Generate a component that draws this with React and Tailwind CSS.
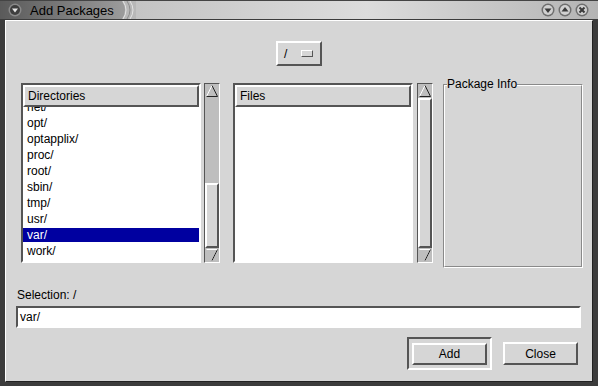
const DIRS = ['net/', 'opt/', 'optapplix/', 'proc/', 'root/', 'sbin/', 'tmp/', 'usr/', 'var/', 'work/']

const sunken = 'border-t-[#555] border-l-[#555] border-b-white border-r-white'
const raised = 'border-t-white border-l-white border-b-[#555] border-r-[#555]'

function UpArrow() {
  return (
    <svg width="14" height="14" viewBox="0 0 14 14" className="block">
      <polyline points="1.5,12.5 7,1.5" stroke="#fff" strokeWidth="1" fill="none" />
      <polyline points="7,1.5 12.5,12.5 1.5,12.5" stroke="#222" strokeWidth="1" fill="none" />
    </svg>
  )
}

function DownArrow() {
  return (
    <svg width="14" height="14" viewBox="0 0 14 14" className="block">
      <polyline points="1.5,1.5 12.5,1.5 7,12.5" stroke="#fff" strokeWidth="1" fill="none" />
      <polyline points="12.5,1.5 7,12.5" stroke="#222" strokeWidth="1" fill="none" />
    </svg>
  )
}

function Scrollbar({ full }) {
  return (
    <div className={`w-[16px] h-[180px] border ${sunken} bg-[#bebebe] flex flex-col`}>
      <UpArrow />
      {full ? (
        <div className={`flex-1 border-2 ${raised} bg-[#d6d6d6]`} />
      ) : (
        <>
          <div className="h-[85px]" />
          <div className={`flex-1 border-2 ${raised} bg-[#d6d6d6]`} />
        </>
      )}
      <DownArrow />
    </div>
  )
}

function ListBox({ title, items, selected }) {
  return (
    <div className={`w-[180px] h-[180px] border-2 ${sunken} bg-white flex flex-col`}>
      <div className={`h-[22px] shrink-0 border-2 ${raised} bg-[#d6d6d6] pl-[3px] flex items-center`}>
        {title}
      </div>
      <div className="flex-1 overflow-hidden">
        <div className="-mt-[8px]">
          {items.map(d => (
            <div key={d} className="h-[16px] py-[1px]">
              <div className={`h-[14px] leading-[14px] pl-[4px] ${d === selected ? 'bg-[#0000a0] text-white' : ''}`}>{d}</div>
            </div>
          ))}
        </div>
      </div>
    </div>
  )
}

function TitleButton({ kind }) {
  return (
    <svg width="14" height="14" viewBox="0 0 14 14" className="block">
      <circle cx="7" cy="7" r="6.5" fill="#6e6e6e" />
      <circle cx="7" cy="7" r="5" fill="#d0d0d0" />
      {kind === 'down' && <polygon points="3.5,5.5 10.5,5.5 7,10" fill="#3a3a3a" />}
      {kind === 'up' && <polygon points="3.5,8.5 10.5,8.5 7,4" fill="#3a3a3a" />}
      {kind === 'close' && (
        <g stroke="#3a3a3a" strokeWidth="2">
          <line x1="4.5" y1="4.5" x2="9.5" y2="9.5" />
          <line x1="9.5" y1="4.5" x2="4.5" y2="9.5" />
        </g>
      )}
    </svg>
  )
}

export default function App() {
  return (
    <div className="w-[598px] h-[386px] bg-[#3c3c3c] flex flex-col text-[12px] text-black overflow-hidden" style={{ fontFamily: '"Liberation Sans", Arial, sans-serif' }}>
      {/* title bar */}
      <div className="h-[19px] shrink-0 flex border-t border-[#444]">
        <div className="w-[122px] bg-gradient-to-r from-[#5a5a5a] to-[#9a9a9a] flex items-center pl-[8px] gap-[8px]">
          <svg width="14" height="14" viewBox="0 0 14 14" className="block">
            <circle cx="7" cy="7" r="6.5" fill="#8a8a8a" />
            <circle cx="7" cy="7" r="5" fill="#3e3e3e" />
            <polygon points="4,5.5 10,5.5 7,9.5" fill="#e8e8e8" />
          </svg>
          <span className="text-[13px] leading-none">Add Packages</span>
        </div>
        <svg width="14" height="18" viewBox="0 0 14 18" className="block bg-[#b8b8b8]">
          <path d="M0 0 Q6 9 0 18 L0 0 Z" fill="#9a9a9a" />
          <path d="M1 0 Q7 9 1 18" stroke="#e4e4e4" fill="none" />
          <path d="M5 0 Q11 9 5 18" stroke="#8c8c8c" fill="none" />
          <path d="M8 0 Q14 9 8 18" stroke="#e4e4e4" fill="none" />
        </svg>
        <div className="flex-1 bg-gradient-to-r from-[#c4c4c4] via-[#dcdcdc] to-[#b4b4b4] flex items-center justify-end gap-[3px] pr-[9px]">
          <TitleButton kind="down" />
          <TitleButton kind="up" />
          <TitleButton kind="close" />
        </div>
      </div>

      {/* body */}
      <div className="flex-1 flex px-[5px] pb-[4px] pt-[1px] bg-[#3c3c3c]">
        <div className="flex-1 flex flex-col bg-[#d6d6d6] border-l border-t border-l-white border-t-white border-r border-b border-r-[#222] border-b-[#222]">
          <div className="flex justify-center pt-[20px]">
            <div className={`w-[46px] h-[25px] border-2 ${raised} flex items-center pl-[6px] gap-[14px]`}>
              <span>/</span>
              <div className={`w-[12px] h-[7px] border ${raised}`} />
            </div>
          </div>

          <div className="flex pl-[15px] mt-[17px]">
            <ListBox title="Directories" items={DIRS} selected="var/" />
            <div className="ml-[3px]"><Scrollbar /></div>
            <div className="ml-[13px]"><ListBox title="Files" items={[]} /></div>
            <div className="ml-[4px]"><Scrollbar full /></div>
            <div className="ml-[10px] mt-[1px] relative w-[140px] h-[184px] border border-t-[#8a8a8a] border-l-[#8a8a8a] border-b-white border-r-white">
              <div className="w-full h-full border border-t-white border-l-white border-b-[#8a8a8a] border-r-[#8a8a8a]" />
              <span className="absolute left-[3px] -top-[8px] bg-[#d6d6d6] leading-[14px]">Package Info</span>
            </div>
          </div>

          <div className="pl-[11px] mt-[20px] leading-[14px]">Selection: /</div>
          <div className={`ml-[10px] mr-[11px] mt-[4px] h-[22px] border-2 ${sunken} bg-white flex items-center pl-[2px]`}>
            var/
          </div>

          <div className="flex justify-end items-center pr-[14px] mt-[9px] gap-[11px]">
            <div className={`w-[85px] h-[33px] border-2 ${sunken} flex items-center justify-center`}>
              <div className={`w-[75px] h-[22px] border-2 ${raised} flex items-center justify-center`}>Add</div>
            </div>
            <div className={`w-[75px] h-[23px] border-2 ${raised} flex items-center justify-center`}>Close</div>
          </div>
        </div>
      </div>
    </div>
  )
}
